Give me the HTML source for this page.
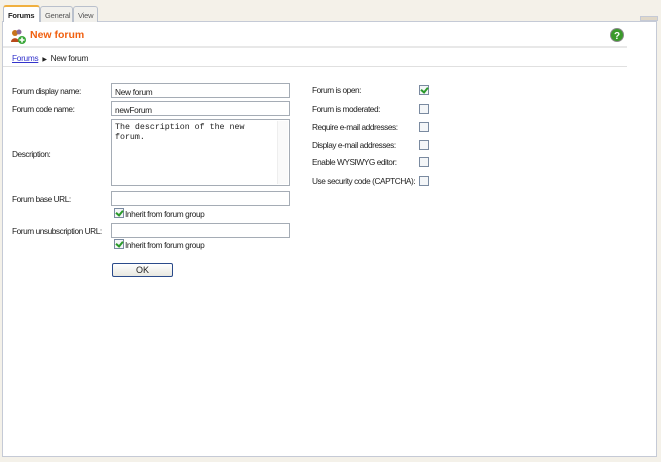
<!DOCTYPE html>
<html><head><style>
*{margin:0;padding:0;box-sizing:border-box}
body{width:661px;height:462px;background:#f4f1e9;font-family:"Liberation Sans",Arial,sans-serif;font-size:8px;color:#222;position:relative;overflow:hidden}
.abs{position:absolute}
.tab{position:absolute;top:6px;height:16px;border:1px solid #b9c0cc;border-bottom:none;border-radius:3px 3px 0 0;background:#f1f0ec;font-size:7.5px;color:#555;padding:4px 4px 0;letter-spacing:-0.2px}
.panel{position:absolute;left:2px;top:21px;width:655px;height:436px;background:#fff;border:1px solid #c5cad6}
.lbl{position:absolute;left:12px;font-size:8.3px;color:#222;letter-spacing:-0.45px;white-space:nowrap}
.inp{position:absolute;left:111px;width:179px;height:15px;border:1px solid #a5acb5;background:#fff;font-size:8.3px;padding:3px 0 0 3px;letter-spacing:-0.3px}
.cb{position:absolute;width:10px;height:10px;border:1px solid #7a8aa0;background:#f4f6f8}
.ck::after{content:"";position:absolute;left:2px;top:0px;width:3px;height:5px;border:solid #2a9a2a;border-width:0 2px 2px 0;transform:rotate(40deg)}
</style></head><body>
<div class="panel"></div>
<div class="tab" style="left:3px;top:5px;width:37px;height:17px;background:#fff;border-color:#b9c0cc;border-top:2px solid #f0b040;font-weight:bold;color:#222;z-index:2">Forums</div>
<div class="tab" style="left:40px;width:33px">General</div>
<div class="tab" style="left:73px;width:25px">View</div>
<div class="abs" style="left:640px;top:16px;width:18px;height:5px;background:#e0d8c8;border:1px solid #c5cad6"></div>
<svg class="abs" style="left:10px;top:28px" width="16" height="16" viewBox="0 0 16 16"><circle cx="5" cy="5" r="3" fill="#c8741a"/><path d="M1 14c0-5 8-5 8 0z" fill="#b84a1a"/><circle cx="9" cy="4" r="2.5" fill="#8a6a9a"/><circle cx="12" cy="12" r="4" fill="#3aa83a"/><path d="M12 9.5v5M9.5 12h5" stroke="#fff" stroke-width="1.6"/></svg>
<div class="abs" style="left:30px;top:29px;font-size:10.5px;font-weight:bold;color:#f06010">New forum</div>
<svg class="abs" style="left:610px;top:28px" width="14" height="14"><circle cx="7" cy="7" r="6.5" fill="#3a9a2a" stroke="#888"/><text x="7" y="11" font-size="10" font-weight="bold" fill="#fff" text-anchor="middle" font-family="Liberation Sans">?</text></svg>
<div class="abs" style="left:3px;top:46px;width:624px;height:2px;background:#e8e8e8"></div>
<div class="abs" style="left:12px;top:53px;font-size:8.3px;letter-spacing:-0.3px"><span style="color:#3333cc;text-decoration:underline">Forums</span> <span style="font-size:6px;margin:0 2px">&#9654;</span> New forum</div>
<div class="abs" style="left:3px;top:66px;width:624px;height:1px;background:#e0e0e0"></div>

<div class="lbl" style="top:86px">Forum display name:</div><div class="inp" style="top:83px">New forum</div>
<div class="lbl" style="top:104px">Forum code name:</div><div class="inp" style="top:101px">newForum</div>
<div class="lbl" style="top:149px">Description:</div>
<div class="abs" style="left:111px;top:119px;width:179px;height:67px;border:1px solid #a5acb5;font-family:'Liberation Mono',monospace;font-size:8.3px;padding:3px 14px 0 3px;line-height:10px">The description of the new<br>forum.<div class="abs" style="right:1px;top:1px;width:11px;bottom:1px;background:#fafafa;border-left:1px solid #eee"></div></div>
<div class="lbl" style="top:194px">Forum base URL:</div><div class="inp" style="top:191px"></div>
<div class="cb ck" style="left:114px;top:208px"></div><div class="abs" style="left:125px;top:209px;font-size:8.3px;letter-spacing:-0.4px">Inherit from forum group</div>
<div class="lbl" style="top:226px">Forum unsubscription URL:</div><div class="inp" style="top:223px"></div>
<div class="cb ck" style="left:114px;top:239px"></div><div class="abs" style="left:125px;top:240px;font-size:8.3px;letter-spacing:-0.4px">Inherit from forum group</div>
<div class="abs" style="left:112px;top:263px;width:61px;height:14px;border:1px solid #2a4a8a;border-radius:2px;background:linear-gradient(#fff,#e8e8e0);text-align:center;font-size:9px;line-height:12px">OK</div>

<div class="lbl" style="left:312px;top:85px">Forum is open:</div><div class="cb ck" style="left:419px;top:85px"></div>
<div class="lbl" style="left:312px;top:104px">Forum is moderated:</div><div class="cb" style="left:419px;top:104px"></div>
<div class="lbl" style="left:312px;top:122px">Require e-mail addresses:</div><div class="cb" style="left:419px;top:122px"></div>
<div class="lbl" style="left:312px;top:140px">Display e-mail addresses:</div><div class="cb" style="left:419px;top:140px"></div>
<div class="lbl" style="left:312px;top:157px">Enable WYSIWYG editor:</div><div class="cb" style="left:419px;top:157px"></div>
<div class="lbl" style="left:312px;top:176px">Use security code (CAPTCHA):</div><div class="cb" style="left:419px;top:176px"></div>
</body></html>
